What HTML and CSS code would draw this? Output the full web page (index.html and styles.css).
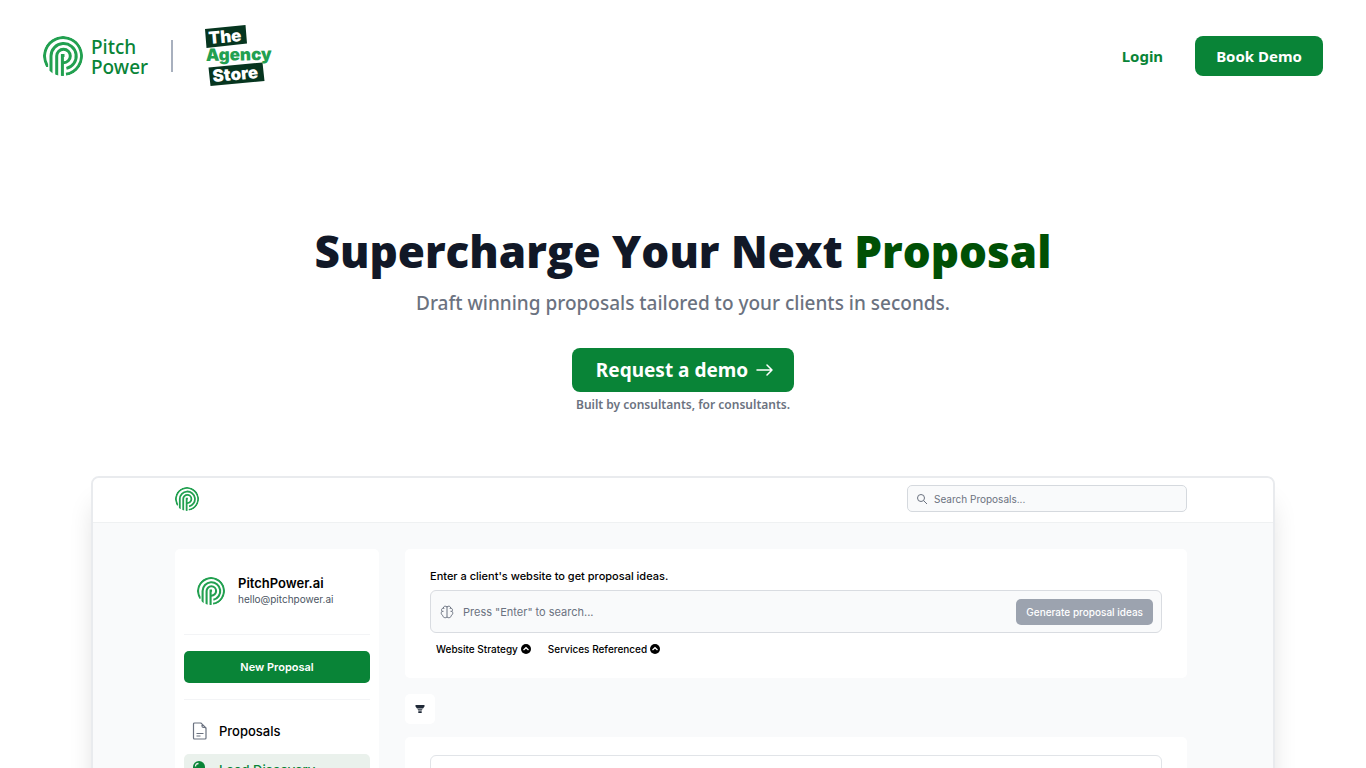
FILE: index.html
```html
<!DOCTYPE html>
<html lang="en">

<head>
	<meta charset="UTF-8">
	<meta name="viewport" content="width=device-width, initial-scale=1">
	<title>Pitch Power</title>
	<link rel="stylesheet" href="styles.css">
</head>

<body>
	<svg class="symbols" aria-hidden="true">
		<symbol id="logo" viewBox="0 0 40 40">
			<clipPath id="round">
				<circle cx="20" cy="20" r="20" />
			</clipPath>
			<g clip-path="url(#round)" fill="none" stroke="#22a050" stroke-width="3">
				<path d="M3.600 31V28.500A18.500 18.500 0 1 1 23 38.300" />
				<path d="M8 40V20A12.600 12.600 0 1 1 23.400 32.400" />
				<path d="M13.700 40V20A6.800 6.800 0 1 1 20.500 26.800H19.400" />
				<path d="M19.400 40V19.500H21.500" />
			</g>
		</symbol>
	</svg>
	<div class="page">
		<header class="header">
			<a class="brand" href="#">
				<svg class="brand-logo">
					<use href="#logo" />
				</svg>
				<span>Pitch<br>Power</span>
			</a>
			<span class="divider"></span>
			<a class="partner" href="#" aria-label="The Agency Store">
				<svg viewBox="0 0 68 64">
					<path fill="#06351f" d="M1 5l40.500-4L43 19.500 2.500 24zM4.500 43.500l54-5L60.500 57l-54 5z" />
					<g font-family="Inter, sans-serif" font-weight="900">
						<text x="5" y="20" fill="#fff" font-size="17" transform="rotate(-5 5 20)">The</text>
						<text x="2" y="37" fill="#22a050" font-size="17" transform="rotate(-1 2 37)">Agency</text>
						<text x="9" y="58" fill="#fff" font-size="17" transform="rotate(-5 9 58)">Store</text>
					</g>
				</svg>
			</a>
			<nav class="nav">
				<a class="login" href="#">Login</a>
				<a class="book" href="#">Book Demo</a>
			</nav>
		</header>

		<section class="hero">
			<h1>Supercharge Your Next <span>Proposal</span></h1>
			<p class="lead">Draft winning proposals tailored to your clients in seconds.</p>
			<a class="request" href="#">
				Request a demo
				<svg viewBox="0 0 18 14">
					<path d="M1 7h15M11 2l5 5-5 5" />
				</svg>
			</a>
			<p class="note">Built by consultants, for consultants.</p>
		</section>

		<div class="app">
			<div class="app-header">
				<svg class="app-logo">
					<use href="#logo" />
				</svg>
				<label class="search">
					<svg viewBox="0 0 12 12">
						<circle cx="5" cy="5" r="3.500" />
						<path d="M7.600 7.600L11 11" />
					</svg>
					<input type="text" placeholder="Search Proposals..." aria-label="Search proposals">
				</label>
			</div>
			<div class="app-body">
				<aside class="sidebar">
					<div class="account">
						<svg class="account-logo">
							<use href="#logo" />
						</svg>
						<div>
							<div class="account-name">PitchPower.ai</div>
							<div class="account-mail">hello@pitchpower.ai</div>
						</div>
					</div>
					<div class="create">
						<button type="button">New Proposal</button>
					</div>
					<nav class="menu">
						<a href="#">
							<svg viewBox="0 0 16 18" fill="none" stroke="#6b7280" stroke-width="1.200">
								<path d="M2.500 1h6.500l5 5v10a1 1 0 0 1-1 1h-10.500a1 1 0 0 1-1-1v-14a1 1 0 0 1 1-1zM8 1c1.500 0 2 1 2 2v1c0 1 .5 1.500 1.500 1.500h1c1 0 1.500.500 1.500 1.500M4.500 11.500h7M4.500 14h4" />
							</svg>
							Proposals
						</a>
						<a class="active" href="#">
							<svg viewBox="0 0 16 18">
								<circle cx="7" cy="6" r="6" fill="#098437" />
								<path d="M3.500 5.500q0-3 3-3" fill="none" stroke="#eaf1ec" stroke-width="1.300" />
								<path d="M5 13h4v4H5z" fill="#098437" />
							</svg>
							Lead Discovery
						</a>
					</nav>
				</aside>
				<main class="main">
					<div class="card ideas">
						<label class="ideas-label" for="website">Enter a client's website to get proposal ideas.</label>
						<div class="ideas-box">
							<svg viewBox="0 0 14 14">
								<path d="M7 1.500v11M7 2C5.500.500 3.500 1.200 3.300 3 1.500 3.400 1 5.200 2 6.300.800 7.500 1 9.600 2.600 10.300 2.800 12.500 5.500 13.500 7 12M7 2c1.500-1.500 3.500-.800 3.700 1 1.800.400 2.300 2.200 1.300 3.300 1.200 1.200 1 3.300-.600 4-.200 2.200-2.900 3.200-4.400 1.700M2 6.300h1.500M12 6.300h-1.500M3.300 3l1 1M10.700 3l-1 1" />
							</svg>
							<input id="website" type="text" placeholder="Press &quot;Enter&quot; to search...">
							<button type="button">Generate proposal ideas</button>
						</div>
						<div class="options">
							<button type="button">
								Website Strategy
								<svg viewBox="0 0 10 10">
									<circle cx="5" cy="5" r="5" />
									<path d="M2.500 6L5 3.700 7.500 6" />
								</svg>
							</button>
							<button type="button">
								Services Referenced
								<svg viewBox="0 0 10 10">
									<circle cx="5" cy="5" r="5" />
									<path d="M2.500 6L5 3.700 7.500 6" />
								</svg>
							</button>
						</div>
					</div>
					<button class="filter" type="button" aria-label="Filter">
						<svg viewBox="0 0 10 10">
							<path d="M.5 1h9v1.500L8 4.500H2L.5 2.500zM2.500 5.200h5L6.700 6.500H3.300zM3.300 7.300h3.400V9H3.300z" />
						</svg>
					</button>
					<div class="card list">
						<div class="list-item"></div>
					</div>
				</main>
			</div>
		</div>
	</div>
</body>

</html>
```
FILE: styles.css
```css
* {
	box-sizing: border-box;
}

body {
	margin: 0;
	background: #fff;
	color: #111827;
	font-family: "Segoe UI", "Noto Sans", sans-serif;
}

a {
	color: inherit;
	text-decoration: none;
}

h1,
p {
	margin: 0;
}

button,
input {
	border: none;
	font: inherit;
}

button {
	cursor: pointer;
}

.symbols {
	display: block;
	width: 0;
	height: 0;
}

.page {
	height: 100vh;
	overflow: hidden;
}

.header {
	display: flex;
	align-items: center;
	max-width: 1280px;
	height: 112px;
	margin: 0 auto;
}

.brand {
	display: flex;
	align-items: center;
	gap: 8px;
	color: #098437;
	font-size: 19px;
	font-weight: 500;
	line-height: 20px;
}

.brand-logo {
	width: 40px;
	height: 40px;
}

.brand span {
	padding-top: 2px;
}

.divider {
	width: 2px;
	height: 32px;
	margin: 0 31px 0 23px;
	background: #a8b0be;
}

.partner svg {
	display: block;
	width: 68px;
	height: 64px;
	overflow: visible;
}

.nav {
	display: flex;
	align-items: center;
	gap: 32px;
	margin-left: auto;
	font-size: 15px;
	font-weight: 700;
	line-height: 24px;
}

.login {
	color: #098437;
}

.book {
	padding: 8px 21px;
	border-radius: 8px;
	background: #098437;
	color: #fff;
}

.hero {
	display: flex;
	flex-direction: column;
	align-items: center;
	padding: 115px 24px 0;
	text-align: center;
}

.hero h1 {
	font-family: "Segoe UI", "Open Sans", sans-serif;
	font-size: 44px;
	font-weight: 800;
	line-height: 48px;
}

.hero h1 span {
	color: #005005;
}

.lead {
	margin-top: 14px;
	color: #6b7280;
	font-size: 19px;
	font-weight: 500;
	line-height: 28px;
}

.request {
	display: flex;
	align-items: center;
	gap: 8px;
	margin-top: 31px;
	padding: 8px 20px 8px 24px;
	border-radius: 8px;
	background: #098437;
	color: #fff;
	font-size: 19px;
	font-weight: 700;
	line-height: 28px;
}

.request svg {
	width: 18px;
	height: 14px;
	fill: none;
	stroke: currentColor;
	stroke-width: 1.5;
	stroke-linecap: round;
	stroke-linejoin: round;
}

.note {
	margin-top: 5px;
	color: #6b7280;
	font-size: 12px;
	font-weight: 600;
	line-height: 16px;
}

.app {
	max-width: 1184px;
	margin: 63px auto 0;
	border: 2px solid #e9ebee;
	border-radius: 8px;
	background: #f9fafb;
	box-shadow: 0 24px 28px -6px rgba(0, 0, 0, 0.16);
	font-family: Inter, sans-serif;
	overflow: hidden;
}

.app-header {
	display: flex;
	align-items: center;
	justify-content: space-between;
	height: 45px;
	padding: 0 86px 3px 82px;
	border-bottom: 1px solid #eff1f2;
	background: #fff;
}

.app-logo {
	width: 24px;
	height: 24px;
}

.search {
	display: flex;
	align-items: center;
	gap: 6px;
	width: 280px;
	height: 27px;
	padding: 0 8px;
	border: 1px solid #d5d9de;
	border-radius: 5px;
	background: #f9fafb;
}

.search svg {
	width: 12px;
	height: 12px;
	fill: none;
	stroke: #6b7280;
}

.search input {
	flex: 1;
	min-width: 0;
	padding: 0;
	background: transparent;
	font-size: 10px;
}

input::placeholder {
	color: #6b7280;
	opacity: 1;
}

.app-body {
	display: flex;
	align-items: flex-start;
	gap: 26px;
	padding: 26px 86px 40px 82px;
}

.sidebar {
	width: 204px;
	padding: 0 9px 16px;
	border-radius: 5px;
	background: #fff;
}

.account {
	display: flex;
	align-items: center;
	gap: 13px;
	height: 86px;
	padding: 0 13px 2px;
	border-bottom: 1px solid #f3f4f6;
}

.account-logo {
	width: 28px;
	height: 28px;
}

.account-name {
	color: #000;
	font-size: 13px;
	font-weight: 600;
	line-height: 16px;
}

.account-mail {
	color: #4b5563;
	font-size: 10px;
	line-height: 16px;
}

.create {
	padding: 16px 0;
	border-bottom: 1px solid #f3f4f6;
}

.create button {
	width: 100%;
	height: 32px;
	border-radius: 5px;
	background: #098437;
	color: #fff;
	font-size: 11px;
	font-weight: 600;
}

.menu {
	display: flex;
	flex-direction: column;
	gap: 8px;
	padding-top: 15px;
}

.menu a {
	display: flex;
	align-items: center;
	gap: 11px;
	height: 31px;
	padding: 0 8px;
	border-radius: 5px;
	color: #000;
	font-size: 13px;
	font-weight: 500;
}

.menu svg {
	width: 16px;
	height: 18px;
}

.menu .active {
	background: #eaf1ec;
	color: #098437;
}

.main {
	flex: 1;
	min-width: 0;
}

.card {
	padding: 18px 25px;
	border-radius: 5px;
	background: #fff;
}

.ideas {
	padding-bottom: 20px;
}

.ideas-label {
	display: block;
	color: #000;
	font-size: 11px;
	font-weight: 500;
	line-height: 18px;
}

.ideas-box {
	display: flex;
	align-items: center;
	gap: 9px;
	height: 43px;
	margin-top: 5px;
	padding: 0 8px 0 9px;
	border: 1px solid #d9dce1;
	border-radius: 6px;
	background: #f9fafb;
}

.ideas-box svg {
	width: 14px;
	height: 14px;
	fill: none;
	stroke: #6b7280;
}

.ideas-box input {
	flex: 1;
	min-width: 0;
	padding: 0;
	background: transparent;
	font-size: 11px;
}

.ideas-box button {
	height: 26px;
	padding: 0 10px;
	border-radius: 5px;
	background: #9ca3af;
	color: #fff;
	font-size: 10px;
	font-weight: 500;
}

.options {
	display: flex;
	gap: 17px;
	margin-top: 7px;
	padding-left: 6px;
}

.options button {
	display: flex;
	align-items: center;
	gap: 3px;
	padding: 0;
	background: transparent;
	color: #000;
	font-size: 10px;
	font-weight: 500;
	line-height: 18px;
}

.options svg {
	width: 10px;
	height: 10px;
}

.options path {
	fill: none;
	stroke: #fff;
	stroke-width: 1.3;
}

.filter {
	display: flex;
	align-items: center;
	justify-content: center;
	width: 30px;
	height: 30px;
	margin: 16px 0 13px;
	padding: 0;
	border-radius: 5px;
	background: #fff;
}

.filter svg {
	width: 10px;
	height: 10px;
	fill: #1f2937;
}

.list-item {
	height: 120px;
	border: 1px solid #e1e4e8;
	border-radius: 6px;
}
```
